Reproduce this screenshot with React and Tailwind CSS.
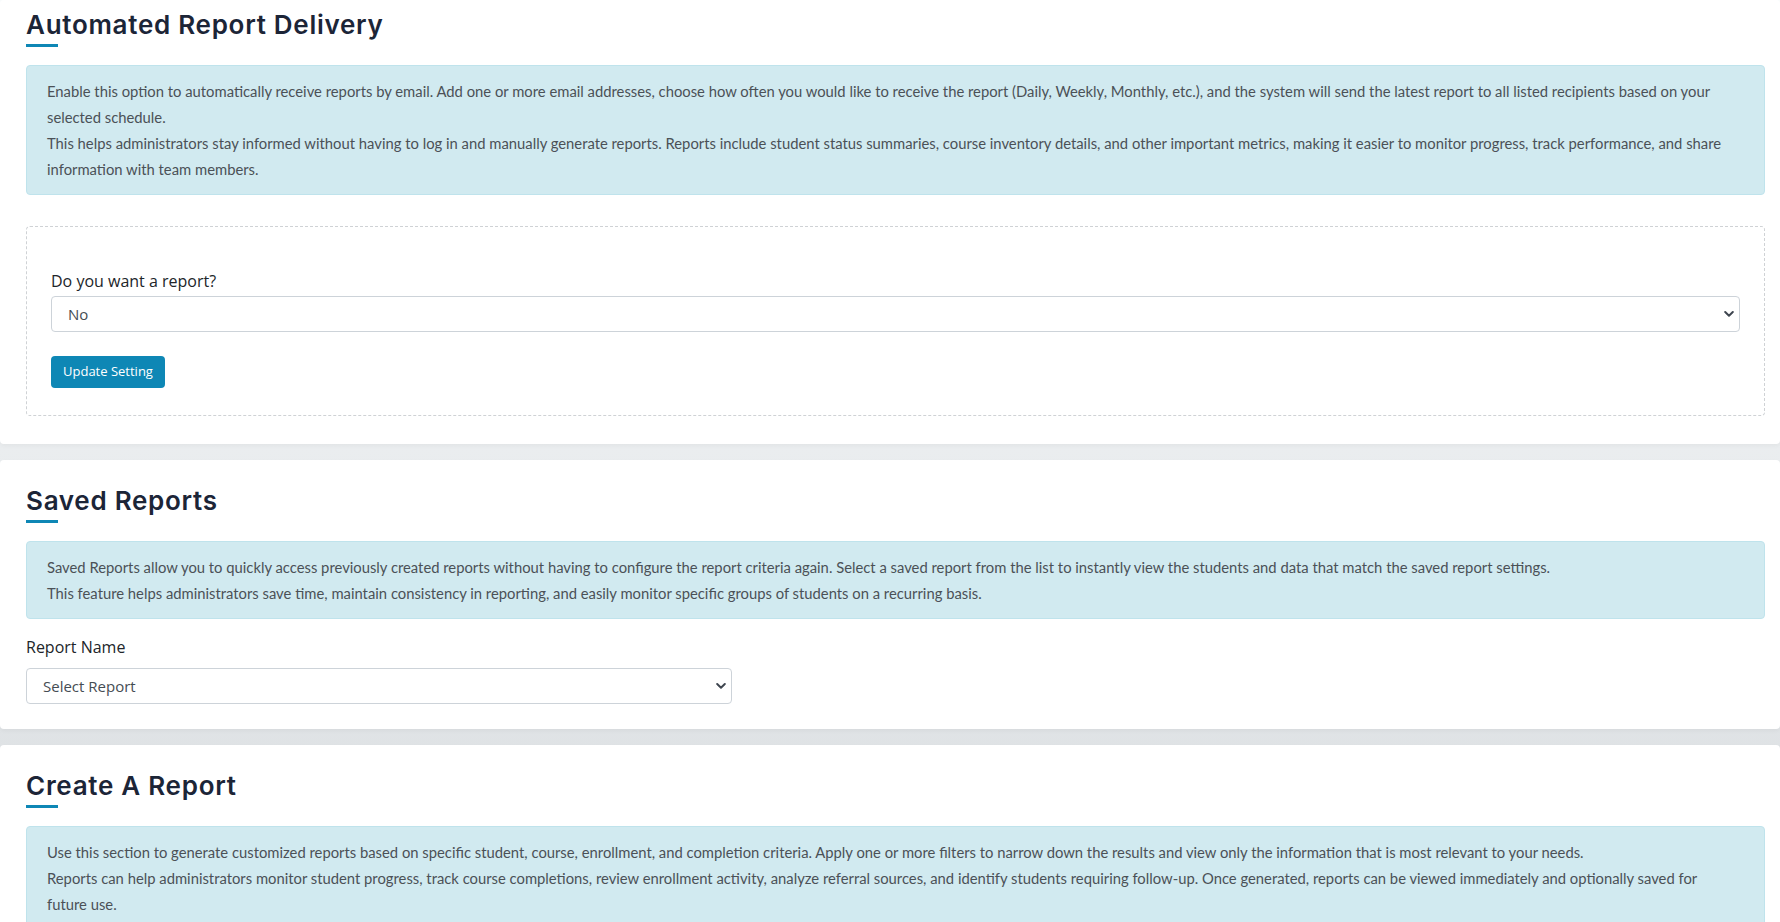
import React from "react";

const heading = { fontFamily: "Inter, 'Open Sans', sans-serif" };
const body = { fontFamily: "Lato, 'Open Sans', sans-serif" };
const form = { fontFamily: "'Open Sans', Lato, sans-serif" };

const SectionTitle = ({ children }) => (
  <div>
    <h2 className="mt-[2px] text-[26px] font-semibold leading-[34px] text-[#1c2537] tracking-[0.72px]" style={heading}>
      {children}
    </h2>
    <div className="mt-[2px] h-[3px] w-[32px] bg-[#0e87b5]"></div>
  </div>
);

const InfoAlert = ({ lines }) => (
  <div
    className="rounded-[4px] border border-[#bfe3ec] bg-[#d1eaf0] pl-[20px] pr-[24px] py-[12px] text-[14.8px] leading-[26px] text-[#4b5157]"
    style={body}
  >
    {lines.map((line, i) => (
      <p key={i}>{line}</p>
    ))}
  </div>
);

const Chevron = () => (
  <svg
    className="pointer-events-none absolute right-[6px] top-1/2 -translate-y-1/2"
    width="10"
    height="7"
    viewBox="0 0 10 7"
    fill="none"
  >
    <path d="M1.2 1.5 L5 5.2 L8.8 1.5" stroke="#3f4650" strokeWidth="2" strokeLinecap="round" strokeLinejoin="round" />
  </svg>
);

const SelectBox = ({ value, className }) => (
  <div className={"relative " + className}>
    <select
      className="h-[36px] w-full appearance-none rounded-[4px] border border-[#cdd3d9] bg-white pl-[16px] pr-[28px] text-[15px] text-[#454c53] outline-none"
      style={form}
      defaultValue={value}
    >
      <option>{value}</option>
    </select>
    <Chevron />
  </div>
);

const Card = ({ top = "pt-[22px]", children }) => (
  <div className={"rounded-[4px] bg-white pl-[26px] pr-[15px] shadow-[0_2px_4px_rgba(0,0,0,0.04)] " + top}>
    {children}
  </div>
);

export default function App() {
  return (
    <div className="flex min-h-screen flex-col gap-[16px] bg-gradient-to-b from-[#fbfdfe] to-[#d6dadd]">
      {/* Automated delivery */}
      <Card top="pt-[6px]">
        <SectionTitle>Automated Report Delivery</SectionTitle>
        <div className="mt-[18px]">
          <InfoAlert
            lines={[
              "Enable this option to automatically receive reports by email. Add one or more email addresses, choose how often you would like to receive the report (Daily, Weekly, Monthly, etc.), and the system will send the latest report to all listed recipients based on your selected schedule.",
              "This helps administrators stay informed without having to log in and manually generate reports. Reports include student status summaries, course inventory details, and other important metrics, making it easier to monitor progress, track performance, and share information with team members.",
            ]}
          />
        </div>
        <div className="mt-[31px] mb-[28px] rounded-[4px] border border-dashed border-[#cfd2d5] px-[24px] pt-[42px] pb-[27px]">
          <label className="block text-[16px] leading-[24px] text-[#212529]" style={form}>
            Do you want a report?
          </label>
          <SelectBox value="No" className="mt-[3px]" />
          <button
            className="mt-[24px] h-[32px] rounded-[4px] bg-[#0e87b5] px-[12px] text-[13px] text-white"
            style={form}
          >
            Update Setting
          </button>
        </div>
      </Card>

      {/* Saved reports */}
      <Card>
        <SectionTitle>Saved Reports</SectionTitle>
        <div className="mt-[18px]">
          <InfoAlert
            lines={[
              "Saved Reports allow you to quickly access previously created reports without having to configure the report criteria again. Select a saved report from the list to instantly view the students and data that match the saved report settings.",
              "This feature helps administrators save time, maintain consistency in reporting, and easily monitor specific groups of students on a recurring basis.",
            ]}
          />
        </div>
        <label className="mt-[16px] block text-[16px] leading-[24px] text-[#212529]" style={form}>
          Report Name
        </label>
        <SelectBox value="Select Report" className="mt-[9px] mb-[25px] w-[706px]" />
      </Card>

      {/* Create a report */}
      <Card>
        <SectionTitle>Create A Report</SectionTitle>
        <div className="mt-[18px]">
          <InfoAlert
            lines={[
              "Use this section to generate customized reports based on specific student, course, enrollment, and completion criteria. Apply one or more filters to narrow down the results and view only the information that is most relevant to your needs.",
              "Reports can help administrators monitor student progress, track course completions, review enrollment activity, analyze referral sources, and identify students requiring follow-up. Once generated, reports can be viewed immediately and optionally saved for future use.",
            ]}
          />
        </div>
        <div className="h-[60px]"></div>
      </Card>
    </div>
  );
}
